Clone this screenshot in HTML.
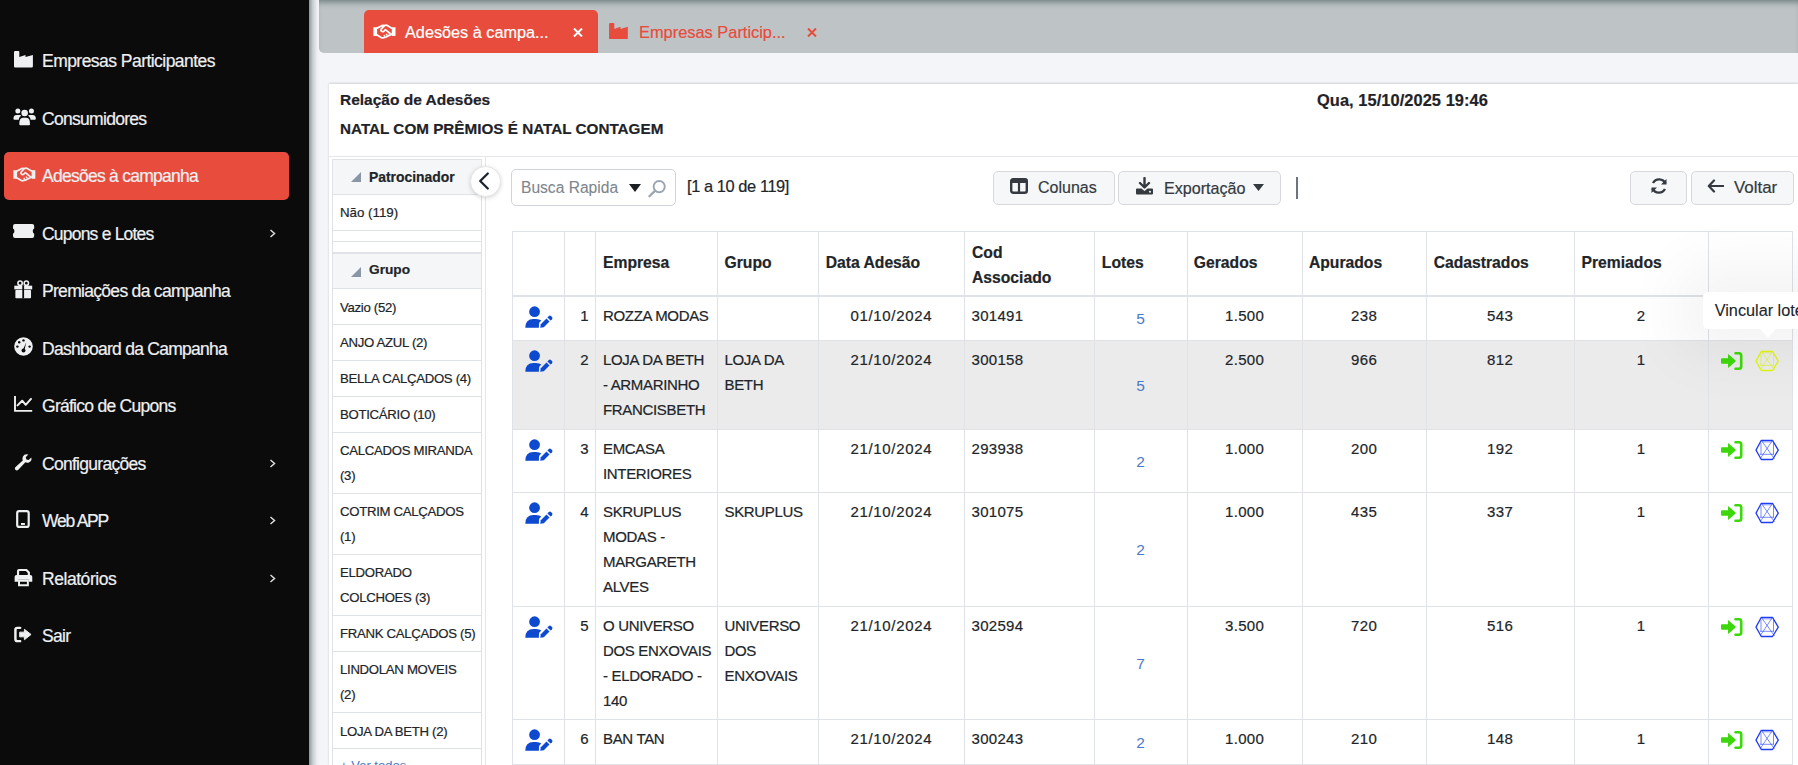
<!DOCTYPE html>
<html><head><meta charset="utf-8">
<style>
html,body{margin:0;padding:0;width:1798px;height:765px;overflow:hidden;position:relative;font-family:"Liberation Sans",sans-serif;}
.t{position:absolute;white-space:nowrap;-webkit-text-stroke-width:0.2px;}
</style></head><body>
<div style="position:absolute;left:0px;top:0px;width:1798px;height:765px;background:#f4f5f9"></div>
<div style="position:absolute;left:0px;top:0px;width:309px;height:765px;background:#0b0b0b"></div>
<div style="position:absolute;left:309px;top:0px;width:11px;height:765px;background:linear-gradient(to right,#8d9598 0%,#c9ced1 35%,#eef0f3 75%,#f3f4f8 100%)"></div>
<div style="position:absolute;left:4px;top:152px;width:285px;height:48px;background:#e74c3c;border-radius:5px"></div>
<div class="t" style="left:42px;top:53.19px;font-size:17.5px;line-height:17.5px;color:#eef0f2;letter-spacing:-0.537px;">Empresas Participantes</div>
<svg style="position:absolute;left:13.8px;top:50.8px;overflow:visible" width="19" height="16.5" viewBox="0 0 19 16.5"><path d="M1.2 0H4.5Q5.3 0 5.3 0.8V6L11.5 3.9V6L18.9 3.9V15.3Q18.9 16.5 17.7 16.5H1.2Q0 16.5 0 15.3V1.2Q0 0 1.2 0Z" fill="#eef0f2"/></svg>
<div class="t" style="left:42px;top:111.19px;font-size:17.5px;line-height:17.5px;color:#eef0f2;letter-spacing:-0.703px;">Consumidores</div>
<svg style="position:absolute;left:12.5px;top:106.7px;overflow:visible" width="23.3" height="18.8" viewBox="0 0 24 19"><circle cx="5" cy="4" r="2.6" fill="#eef0f2"/><circle cx="19" cy="4" r="2.6" fill="#eef0f2"/><circle cx="12" cy="6" r="3.4" fill="#eef0f2"/><path d="M0.5 11.5Q0.5 8 4 8H7Q8 8 8.5 8.5Q6 10.5 6 13H1.5Q0.5 13 0.5 12Z" fill="#eef0f2"/><path d="M23.5 11.5Q23.5 8 20 8H17Q16 8 15.5 8.5Q18 10.5 18 13H22.5Q23.5 13 23.5 12Z" fill="#eef0f2"/><path d="M6.5 17.5Q6.5 11 10 11H14Q17.5 11 17.5 17.5Q17.5 18.5 16.5 18.5H7.5Q6.5 18.5 6.5 17.5Z" fill="#eef0f2"/></svg>
<div class="t" style="left:42px;top:168.19px;font-size:17.5px;line-height:17.5px;color:#eef0f2;letter-spacing:-0.738px;">Adesões à campanha</div>
<svg style="position:absolute;left:12.5px;top:167.3px;overflow:visible" width="22.8" height="14.4" viewBox="0 0 24 15"><rect x="0.4" y="3.3" width="3.9" height="9" fill="#eef0f2"/><rect x="19.6" y="3.3" width="3.9" height="9" fill="#eef0f2"/><path d="M4.3 4.2L9.2 1.6Q10.5 1 11.8 1.6M19.6 4.2L14.5 1.3Q13 0.8 11.8 1.8L8.6 5.2Q7.8 6.6 9 7.6Q10.2 8.4 11.5 7.3L13 5.8L18.8 10.6M4.3 11.4L8.8 14.2Q9.8 14.7 10.8 14.2L13.5 13.5L17.5 11.5L19.6 10.5" fill="none" stroke="#eef0f2" stroke-width="1.8" stroke-linejoin="round" stroke-linecap="round"/><path d="M11.2 11.6L12.6 13M13.6 10.2L15 11.6" stroke="#eef0f2" stroke-width="1.5"/></svg>
<div class="t" style="left:42px;top:226.19px;font-size:17.5px;line-height:17.5px;color:#eef0f2;letter-spacing:-0.792px;">Cupons e Lotes</div>
<svg style="position:absolute;left:12.7px;top:223.8px;overflow:visible" width="21.2" height="14.1" viewBox="0 0 21 14"><path d="M2 0H19Q21 0 21 2V4.4Q19.6 4.9 19.6 7Q19.6 9.1 21 9.6V12Q21 14 19 14H2Q0 14 0 12V9.6Q1.4 9.1 1.4 7Q1.4 4.9 0 4.4V2Q0 0 2 0Z" fill="#eef0f2"/></svg>
<svg style="position:absolute;left:269px;top:228.7px;" width="7" height="9" viewBox="0 0 7 9"><path d="M1.5 1L5.5 4.5L1.5 8" fill="none" stroke="#ddd" stroke-width="1.5"/></svg>
<div class="t" style="left:42px;top:283.39px;font-size:17.5px;line-height:17.5px;color:#eef0f2;letter-spacing:-0.696px;">Premiações da campanha</div>
<svg style="position:absolute;left:13.6px;top:279.5px;overflow:visible" width="18.6" height="18.6" viewBox="0 0 19 19"><circle cx="6.2" cy="3.3" r="2.2" fill="none" stroke="#eef0f2" stroke-width="1.6"/><circle cx="12.6" cy="3.3" r="2.2" fill="none" stroke="#eef0f2" stroke-width="1.6"/><rect x="0.3" y="5.8" width="18.3" height="3.8" fill="#eef0f2"/><rect x="1.4" y="10.2" width="16" height="8.4" rx="0.8" fill="#eef0f2"/><rect x="8.5" y="5.8" width="1.8" height="13" fill="#0b0b0b"/></svg>
<div class="t" style="left:42px;top:341.49px;font-size:17.5px;line-height:17.5px;color:#eef0f2;letter-spacing:-0.734px;">Dashboard da Campanha</div>
<svg style="position:absolute;left:13.8px;top:336.5px;overflow:visible" width="19" height="19" viewBox="0 0 19 19"><circle cx="9.5" cy="9.5" r="9.3" fill="#eef0f2"/><circle cx="9.5" cy="3.4" r="1.2" fill="#0b0b0b"/><circle cx="5.2" cy="5.3" r="1.2" fill="#0b0b0b"/><circle cx="3.4" cy="9.6" r="1.2" fill="#0b0b0b"/><circle cx="15.6" cy="9.6" r="1.2" fill="#0b0b0b"/><path d="M8.7 13.2L12.3 5.2L10.3 13.7Z" fill="#0b0b0b"/><circle cx="9.5" cy="13.6" r="2" fill="#0b0b0b"/></svg>
<div class="t" style="left:42px;top:398.39px;font-size:17.5px;line-height:17.5px;color:#eef0f2;letter-spacing:-0.736px;">Gráfico de Cupons</div>
<svg style="position:absolute;left:13.9px;top:395.9px;overflow:visible" width="19" height="16" viewBox="0 0 19 16"><path d="M1 0V14.9H18.2" fill="none" stroke="#eef0f2" stroke-width="1.9"/><path d="M3.5 9.4L8.2 4.7L11.7 8.8L17 2.9" fill="none" stroke="#eef0f2" stroke-width="2" stroke-linejoin="round" stroke-linecap="round"/></svg>
<div class="t" style="left:42px;top:456.19px;font-size:17.5px;line-height:17.5px;color:#eef0f2;letter-spacing:-0.711px;">Configurações</div>
<svg style="position:absolute;left:13.5px;top:453.8px;overflow:visible" width="18.9" height="16.7" viewBox="0 0 19 17"><path d="M17.5 3.5L14.8 6.2L12.5 5.5L11.8 3.2L14.5 0.5Q10.5 -0.5 9 2.5Q8 4.5 8.8 6.5L1.2 13.5Q0 15 1.5 16.3Q3 17.3 4.3 16L11.5 8.5Q13.5 9.3 15.5 8.3Q18.5 6.8 17.5 3.5Z" fill="#eef0f2"/></svg>
<svg style="position:absolute;left:269px;top:458.7px;" width="7" height="9" viewBox="0 0 7 9"><path d="M1.5 1L5.5 4.5L1.5 8" fill="none" stroke="#ddd" stroke-width="1.5"/></svg>
<div class="t" style="left:42px;top:512.99px;font-size:17.5px;line-height:17.5px;color:#eef0f2;letter-spacing:-1.226px;">Web APP</div>
<svg style="position:absolute;left:15.8px;top:510px;overflow:visible" width="13.9" height="18" viewBox="0 0 14 18"><rect x="1.2" y="1" width="11.6" height="16" rx="2" fill="none" stroke="#eef0f2" stroke-width="2.2"/><path d="M5 14H9" stroke="#eef0f2" stroke-width="2"/></svg>
<svg style="position:absolute;left:269px;top:515.5px;" width="7" height="9" viewBox="0 0 7 9"><path d="M1.5 1L5.5 4.5L1.5 8" fill="none" stroke="#ddd" stroke-width="1.5"/></svg>
<div class="t" style="left:42px;top:571.09px;font-size:17.5px;line-height:17.5px;color:#eef0f2;letter-spacing:-0.449px;">Relatórios</div>
<svg style="position:absolute;left:13.5px;top:568.7px;overflow:visible" width="18.9" height="16.7" viewBox="0 0 19 17"><path d="M4 6V2Q4 1 5 1H12.5L15 3.5V6" fill="none" stroke="#eef0f2" stroke-width="2.2"/><path d="M2.5 6H16.5Q18.5 6 18.5 8V13H15V11H4V13H0.5V8Q0.5 6 2.5 6Z" fill="#eef0f2"/><path d="M5 12H14V16.5H5Z" fill="none" stroke="#eef0f2" stroke-width="2"/></svg>
<svg style="position:absolute;left:269px;top:573.6px;" width="7" height="9" viewBox="0 0 7 9"><path d="M1.5 1L5.5 4.5L1.5 8" fill="none" stroke="#ddd" stroke-width="1.5"/></svg>
<div class="t" style="left:42px;top:627.89px;font-size:17.5px;line-height:17.5px;color:#eef0f2;letter-spacing:-0.706px;">Sair</div>
<svg style="position:absolute;left:14.4px;top:626px;overflow:visible" width="18" height="17" viewBox="0 0 19 17"><path d="M6.5 1.5H3.5Q1.5 1.5 1.5 3.5V13.5Q1.5 15.5 3.5 15.5H6.5" fill="none" stroke="#eef0f2" stroke-width="2.6" stroke-linecap="round"/><path d="M11 3L18 8.5L11 14V11H6V6H11Z" fill="#eef0f2" stroke="#eef0f2" stroke-width="1" stroke-linejoin="round"/></svg>
<div style="position:absolute;left:319px;top:0px;width:1479px;height:53px;background:#bec3c6;border-bottom-left-radius:5px;box-shadow:inset 0 6px 6px -4px rgba(50,75,75,.6)"></div>
<div style="position:absolute;left:364px;top:10px;width:234px;height:43px;background:#e74c3c;border-radius:5px 5px 0 0"></div>
<svg style="position:absolute;left:373.4px;top:24px;" width="23" height="14.6" viewBox="0 0 24 15"><rect x="0.4" y="3.3" width="3.9" height="9" fill="#fff"/><rect x="19.6" y="3.3" width="3.9" height="9" fill="#fff"/><path d="M4.3 4.2L9.2 1.6Q10.5 1 11.8 1.6M19.6 4.2L14.5 1.3Q13 0.8 11.8 1.8L8.6 5.2Q7.8 6.6 9 7.6Q10.2 8.4 11.5 7.3L13 5.8L18.8 10.6M4.3 11.4L8.8 14.2Q9.8 14.7 10.8 14.2L13.5 13.5L17.5 11.5L19.6 10.5" fill="none" stroke="#fff" stroke-width="1.8" stroke-linejoin="round" stroke-linecap="round"/><path d="M11.2 11.6L12.6 13M13.6 10.2L15 11.6" stroke="#fff" stroke-width="1.5"/></svg>
<div class="t" style="left:405px;top:23.94px;font-size:16.25px;line-height:16.25px;color:#fff;">Adesões à campa...</div>
<svg style="position:absolute;left:573px;top:27.7px;" width="10" height="9" viewBox="0 0 10 9"><path d="M1 0.5L9 8.5M9 0.5L1 8.5" stroke="#fff" stroke-width="2"/></svg>
<svg style="position:absolute;left:609px;top:23px;" width="19" height="16.4" viewBox="0 0 19 16.5"><path d="M1.2 0H4.5Q5.3 0 5.3 0.8V6L11.5 3.9V6L18.9 3.9V15.3Q18.9 16.5 17.7 16.5H1.2Q0 16.5 0 15.3V1.2Q0 0 1.2 0Z" fill="#e74c3c"/></svg>
<div class="t" style="left:639px;top:23.82px;font-size:16.4px;line-height:16.4px;color:#e74c3c;">Empresas Particip...</div>
<svg style="position:absolute;left:807px;top:27.7px;" width="10" height="9" viewBox="0 0 10 9"><path d="M1 0.5L9 8.5M9 0.5L1 8.5" stroke="#e74c3c" stroke-width="2"/></svg>
<div style="position:absolute;left:329px;top:84px;width:1469px;height:681px;background:#fff;box-shadow:0 -1px 2px rgba(0,0,0,.13),0 0 2px rgba(0,0,0,.06)"></div>
<div style="position:absolute;left:329px;top:156px;width:1469px;height:1px;background:#e4e6ea"></div>
<div class="t" style="left:340px;top:92.28px;font-size:15.5px;line-height:15.5px;color:#1f2328;font-weight:bold;">Relação de Adesões</div>
<div class="t" style="left:340px;top:120.79px;font-size:15.25px;line-height:15.25px;color:#1f2328;font-weight:bold;">NATAL COM PRÊMIOS É NATAL CONTAGEM</div>
<div class="t" style="left:1317px;top:91.72px;font-size:16.4px;line-height:16.4px;color:#1f2328;font-weight:bold;letter-spacing:0.067px;">Qua, 15/10/2025 19:46</div>
<div style="position:absolute;left:485px;top:157px;width:1px;height:608px;background:#e4e6ea"></div>
<div style="position:absolute;left:332px;top:159px;width:149px;height:35px;background:#f5f6f8"></div>
<div style="position:absolute;left:332px;top:253px;width:149px;height:35px;background:#f5f6f8"></div>
<div style="position:absolute;left:332px;top:159px;width:150px;height:1px;background:#dfe2e6"></div>
<div style="position:absolute;left:332px;top:194px;width:150px;height:1px;background:#dfe2e6"></div>
<div style="position:absolute;left:332px;top:230px;width:150px;height:1px;background:#dfe2e6"></div>
<div style="position:absolute;left:332px;top:241px;width:150px;height:1px;background:#dfe2e6"></div>
<div style="position:absolute;left:332px;top:252px;width:150px;height:2px;background:#dfe2e6"></div>
<div style="position:absolute;left:332px;top:288px;width:150px;height:1px;background:#dfe2e6"></div>
<div style="position:absolute;left:332px;top:324px;width:150px;height:1px;background:#dfe2e6"></div>
<div style="position:absolute;left:332px;top:360px;width:150px;height:1px;background:#dfe2e6"></div>
<div style="position:absolute;left:332px;top:396px;width:150px;height:1px;background:#dfe2e6"></div>
<div style="position:absolute;left:332px;top:432px;width:150px;height:1px;background:#dfe2e6"></div>
<div style="position:absolute;left:332px;top:493px;width:150px;height:1px;background:#dfe2e6"></div>
<div style="position:absolute;left:332px;top:554px;width:150px;height:1px;background:#dfe2e6"></div>
<div style="position:absolute;left:332px;top:615px;width:150px;height:1px;background:#dfe2e6"></div>
<div style="position:absolute;left:332px;top:651px;width:150px;height:1px;background:#dfe2e6"></div>
<div style="position:absolute;left:332px;top:712px;width:150px;height:1px;background:#dfe2e6"></div>
<div style="position:absolute;left:332px;top:748px;width:150px;height:1px;background:#dfe2e6"></div>
<div style="position:absolute;left:332px;top:159px;width:1px;height:606px;background:#dfe2e6"></div>
<div style="position:absolute;left:481px;top:159px;width:1px;height:606px;background:#dfe2e6"></div>
<svg style="position:absolute;left:351px;top:172px;" width="10" height="10" viewBox="0 0 10 10"><path d="M10 0V10H0Z" fill="#8a95a5"/></svg>
<div class="t" style="left:369px;top:170.93px;font-size:13.9px;line-height:13.9px;color:#212529;font-weight:bold;">Patrocinador</div>
<svg style="position:absolute;left:351px;top:267px;" width="10" height="10" viewBox="0 0 10 10"><path d="M10 0V10H0Z" fill="#8a95a5"/></svg>
<div class="t" style="left:369px;top:263.40px;font-size:13.7px;line-height:13.7px;color:#212529;font-weight:bold;">Grupo</div>
<div class="t" style="left:340px;top:206.24px;font-size:13.3px;line-height:13.3px;color:#212529;">Não (119)</div>
<div class="t" style="left:340px;top:300.53px;font-size:13.2px;line-height:13.2px;color:#212529;letter-spacing:-0.3px;">Vazio (52)</div>
<div class="t" style="left:340px;top:336.33px;font-size:13.2px;line-height:13.2px;color:#212529;letter-spacing:-0.3px;">ANJO AZUL (2)</div>
<div class="t" style="left:340px;top:372.33px;font-size:13.2px;line-height:13.2px;color:#212529;letter-spacing:-0.3px;">BELLA CALÇADOS (4)</div>
<div class="t" style="left:340px;top:408.33px;font-size:13.2px;line-height:13.2px;color:#212529;letter-spacing:-0.3px;">BOTICÁRIO (10)</div>
<div class="t" style="left:340px;top:444.33px;font-size:13.2px;line-height:13.2px;color:#212529;letter-spacing:-0.3px;">CALCADOS MIRANDA</div>
<div class="t" style="left:340px;top:469.33px;font-size:13.2px;line-height:13.2px;color:#212529;letter-spacing:-0.3px;">(3)</div>
<div class="t" style="left:340px;top:505.33px;font-size:13.2px;line-height:13.2px;color:#212529;letter-spacing:-0.3px;">COTRIM CALÇADOS</div>
<div class="t" style="left:340px;top:530.33px;font-size:13.2px;line-height:13.2px;color:#212529;letter-spacing:-0.3px;">(1)</div>
<div class="t" style="left:340px;top:566.33px;font-size:13.2px;line-height:13.2px;color:#212529;letter-spacing:-0.3px;">ELDORADO</div>
<div class="t" style="left:340px;top:591.33px;font-size:13.2px;line-height:13.2px;color:#212529;letter-spacing:-0.3px;">COLCHOES (3)</div>
<div class="t" style="left:340px;top:627.33px;font-size:13.2px;line-height:13.2px;color:#212529;letter-spacing:-0.3px;">FRANK CALÇADOS (5)</div>
<div class="t" style="left:340px;top:663.33px;font-size:13.2px;line-height:13.2px;color:#212529;letter-spacing:-0.3px;">LINDOLAN MOVEIS</div>
<div class="t" style="left:340px;top:688.33px;font-size:13.2px;line-height:13.2px;color:#212529;letter-spacing:-0.3px;">(2)</div>
<div class="t" style="left:340px;top:724.63px;font-size:13.2px;line-height:13.2px;color:#212529;letter-spacing:-0.3px;">LOJA DA BETH (2)</div>
<div class="t" style="left:340px;top:759.00px;font-size:13px;line-height:13px;color:#4a78c8;-webkit-text-stroke-width:0;">+ Ver todos</div>
<div style="position:absolute;left:469.5px;top:166.3px;width:31px;height:31px;background:#fff;border-radius:50%;box-shadow:0 1px 4px rgba(0,0,0,.16);border:1px solid #e6e6e6;box-sizing:border-box"></div>
<svg style="position:absolute;left:477px;top:171px;" width="14" height="20" viewBox="0 0 14 20"><path d="M10.8 2.5L3.2 10L10.8 17.5" fill="none" stroke="#1b2230" stroke-width="2.3" stroke-linecap="round" stroke-linejoin="round"/></svg>
<div style="position:absolute;left:511px;top:169px;width:165px;height:37px;border:1px solid #ced4da;border-radius:5px;box-sizing:border-box;background:#fff"></div>
<div class="t" style="left:521px;top:180.09px;font-size:15.6px;line-height:15.6px;color:#80868d;-webkit-text-stroke-width:0.1px;">Busca Rapida</div>
<svg style="position:absolute;left:629px;top:184px;" width="12" height="8" viewBox="0 0 12 8"><path d="M0 0H12L6 8Z" fill="#1b1f24"/></svg>
<svg style="position:absolute;left:647px;top:179px;" width="20" height="20" viewBox="0 0 20 20"><circle cx="12.2" cy="7.6" r="5.6" fill="none" stroke="#9aa4b3" stroke-width="1.9"/><path d="M8.2 11.6L2.4 17.3" stroke="#9aa4b3" stroke-width="2.3" stroke-linecap="round"/></svg>
<div class="t" style="left:687px;top:178.12px;font-size:16.4px;line-height:16.4px;color:#212529;letter-spacing:-0.414px;">[1 a 10 de 119]</div>
<div style="position:absolute;left:993px;top:171px;width:122px;height:34px;background:#f6f7f9;border:1px solid #d6d8db;border-radius:5px;box-sizing:border-box"></div>
<div style="position:absolute;left:1118px;top:171px;width:163px;height:34px;background:#f6f7f9;border:1px solid #d6d8db;border-radius:5px;box-sizing:border-box"></div>
<div style="position:absolute;left:1630px;top:171px;width:57px;height:34px;background:#f6f7f9;border:1px solid #d6d8db;border-radius:5px;box-sizing:border-box"></div>
<div style="position:absolute;left:1691px;top:171px;width:103px;height:34px;background:#f6f7f9;border:1px solid #d6d8db;border-radius:5px;box-sizing:border-box"></div>
<svg style="position:absolute;left:1010px;top:178px;" width="18" height="16" viewBox="0 0 18 16"><rect x="1.2" y="1.2" width="15.6" height="13.6" rx="2" fill="none" stroke="#343a40" stroke-width="2.4"/><rect x="0.5" y="0.5" width="17" height="4.6" rx="2" fill="#343a40"/><path d="M9 4V15" stroke="#343a40" stroke-width="2.2"/></svg>
<div class="t" style="left:1038px;top:179.86px;font-size:16px;line-height:16px;color:#343a40;">Colunas</div>
<svg style="position:absolute;left:1135px;top:177px;" width="19" height="18" viewBox="0 0 19 18"><path d="M9.5 1V10M5 6L9.5 10.5L14 6" fill="none" stroke="#343a40" stroke-width="2.4" stroke-linecap="round" stroke-linejoin="round"/><path d="M1 12.5Q1 11.5 2 11.5H6.5L9.5 14L12.5 11.5H17Q18 11.5 18 12.5V16.5Q18 17.5 17 17.5H2Q1 17.5 1 16.5Z" fill="#343a40"/><circle cx="15" cy="14.8" r="1" fill="#f6f7f9"/></svg>
<div class="t" style="left:1164px;top:179.77px;font-size:16.1px;line-height:16.1px;color:#343a40;">Exportação</div>
<svg style="position:absolute;left:1253px;top:183.5px;" width="11" height="7" viewBox="0 0 11 7"><path d="M0 0H11L5.5 7Z" fill="#343a40"/></svg>
<div style="position:absolute;left:1296px;top:176.5px;width:2px;height:22.5px;background:#6c757d"></div>
<svg style="position:absolute;left:1650px;top:178px;" width="18" height="16" viewBox="0 0 18 16"><path d="M15.5 5.5A7 7 0 0 0 3 5" fill="none" stroke="#343a40" stroke-width="2.4"/><path d="M16.5 1V6.5H11Z" fill="#343a40"/><path d="M2.5 10.5A7 7 0 0 0 15 11" fill="none" stroke="#343a40" stroke-width="2.4"/><path d="M1.5 15V9.5H7Z" fill="#343a40"/></svg>
<svg style="position:absolute;left:1707px;top:179px;" width="17" height="14" viewBox="0 0 17 14"><path d="M7 1.5L1.8 7L7 12.5M2 7H16.5" fill="none" stroke="#343a40" stroke-width="2.2" stroke-linecap="round" stroke-linejoin="round"/></svg>
<div class="t" style="left:1734px;top:179.89px;font-size:16.9px;line-height:16.9px;color:#343a40;">Voltar</div>
<!--TABLE-->
<div style="position:absolute;left:512px;top:231px;width:1281px;height:533px;background:#fff"></div>
<div style="position:absolute;left:512px;top:341px;width:1281px;height:88px;background:#ebebeb"></div>
<div style="position:absolute;left:512px;top:231px;width:1281px;height:1px;background:#dfe2e6"></div>
<div style="position:absolute;left:512px;top:295px;width:1281px;height:2px;background:#dfe2e6"></div>
<div style="position:absolute;left:512px;top:340px;width:1281px;height:1px;background:#dfe2e6"></div>
<div style="position:absolute;left:512px;top:429px;width:1281px;height:1px;background:#dfe2e6"></div>
<div style="position:absolute;left:512px;top:492px;width:1281px;height:1px;background:#dfe2e6"></div>
<div style="position:absolute;left:512px;top:606px;width:1281px;height:1px;background:#dfe2e6"></div>
<div style="position:absolute;left:512px;top:719px;width:1281px;height:1px;background:#dfe2e6"></div>
<div style="position:absolute;left:512px;top:764px;width:1281px;height:1px;background:#dfe2e6"></div>
<div style="position:absolute;left:512px;top:231px;width:1px;height:534px;background:#dfe2e6"></div>
<div style="position:absolute;left:564px;top:231px;width:1px;height:534px;background:#dfe2e6"></div>
<div style="position:absolute;left:595px;top:231px;width:1px;height:534px;background:#dfe2e6"></div>
<div style="position:absolute;left:717px;top:231px;width:1px;height:534px;background:#dfe2e6"></div>
<div style="position:absolute;left:818px;top:231px;width:1px;height:534px;background:#dfe2e6"></div>
<div style="position:absolute;left:964px;top:231px;width:1px;height:534px;background:#dfe2e6"></div>
<div style="position:absolute;left:1094px;top:231px;width:1px;height:534px;background:#dfe2e6"></div>
<div style="position:absolute;left:1187px;top:231px;width:1px;height:534px;background:#dfe2e6"></div>
<div style="position:absolute;left:1302px;top:231px;width:1px;height:534px;background:#dfe2e6"></div>
<div style="position:absolute;left:1426px;top:231px;width:1px;height:534px;background:#dfe2e6"></div>
<div style="position:absolute;left:1574px;top:231px;width:1px;height:534px;background:#dfe2e6"></div>
<div style="position:absolute;left:1708px;top:231px;width:1px;height:534px;background:#dfe2e6"></div>
<div style="position:absolute;left:1792px;top:231px;width:1px;height:534px;background:#dfe2e6"></div>
<div class="t" style="left:603px;top:255.21px;font-size:15.7px;line-height:15.7px;color:#212529;font-weight:bold;">Empresa</div>
<div class="t" style="left:724.5px;top:255.21px;font-size:15.7px;line-height:15.7px;color:#212529;font-weight:bold;">Grupo</div>
<div class="t" style="left:825.7px;top:255.21px;font-size:15.7px;line-height:15.7px;color:#212529;font-weight:bold;">Data Adesão</div>
<div class="t" style="left:1101.8px;top:255.21px;font-size:15.7px;line-height:15.7px;color:#212529;font-weight:bold;">Lotes</div>
<div class="t" style="left:1193.8px;top:255.21px;font-size:15.7px;line-height:15.7px;color:#212529;font-weight:bold;">Gerados</div>
<div class="t" style="left:1308.9px;top:255.21px;font-size:15.7px;line-height:15.7px;color:#212529;font-weight:bold;">Apurados</div>
<div class="t" style="left:1433.7px;top:255.21px;font-size:15.7px;line-height:15.7px;color:#212529;font-weight:bold;">Cadastrados</div>
<div class="t" style="left:1581.5px;top:255.21px;font-size:15.7px;line-height:15.7px;color:#212529;font-weight:bold;">Premiados</div>
<div class="t" style="left:972px;top:244.51px;font-size:15.7px;line-height:15.7px;color:#212529;font-weight:bold;">Cod</div>
<div class="t" style="left:972px;top:269.51px;font-size:15.7px;line-height:15.7px;color:#212529;font-weight:bold;">Associado</div>
<div class="t" style="left:488.5px;width:100px;text-align:right;top:308.30px;font-size:15px;line-height:15px;color:#212529">1</div>
<div class="t" style="left:603px;top:308.30px;font-size:15px;line-height:15px;color:#212529;letter-spacing:-0.33px;">ROZZA MODAS</div>
<div class="t" style="left:791.34px;width:200px;text-align:center;top:308.30px;font-size:15px;line-height:15px;color:#212529;letter-spacing:0.68px;">01/10/2024</div>
<div class="t" style="left:971.5px;top:308.30px;font-size:15px;line-height:15px;color:#212529;letter-spacing:0.3px;">301491</div>
<div class="t" style="left:1040.5px;width:200px;text-align:center;top:311.18px;font-size:15.5px;line-height:15.5px;color:#4d79c9;letter-spacing:0px;-webkit-text-stroke-width:0;">5</div>
<div class="t" style="left:1144.65px;width:200px;text-align:center;top:308.30px;font-size:15px;line-height:15px;color:#212529;letter-spacing:0.3px;">1.500</div>
<div class="t" style="left:1264.225px;width:200px;text-align:center;top:308.30px;font-size:15px;line-height:15px;color:#212529;letter-spacing:0.45px;">238</div>
<div class="t" style="left:1400.225px;width:200px;text-align:center;top:308.30px;font-size:15px;line-height:15px;color:#212529;letter-spacing:0.45px;">543</div>
<div class="t" style="left:1541.225px;width:200px;text-align:center;top:308.30px;font-size:15px;line-height:15px;color:#212529;letter-spacing:0.45px;">2</div>
<svg style="position:absolute;left:525px;top:306.2px;" width="28" height="22" viewBox="0 0 28 22"><circle cx="9.55" cy="5.7" r="5.4" fill="#0d4ad0"/><path d="M0.3 21.7Q0.3 12.9 8.5 12.9H11Q14.5 12.9 16.3 14.4L14.4 16.6Q13.8 17.5 13.9 21.7Z" fill="#0d4ad0"/><path d="M15.2 21.8L15.8 18.2L21.5 12.5L24.5 15.5L18.8 21.2Z" fill="#0d4ad0"/><path d="M22.4 11.4L23.8 10Q24.9 9 26 10L27 11Q28 12.1 27 13.2L25.6 14.6Z" fill="#0d4ad0"/></svg>
<svg style="position:absolute;left:1720px;top:305.8px;" width="24" height="22" viewBox="0 0 24 22"><path d="M2 8.2H8V4.4Q8 4 8.4 4.3L15.6 10.6Q16 11 15.6 11.4L8.4 17.7Q8 18 8 17.6V13.8H2Q1 13.8 1 12.8V9.2Q1 8.2 2 8.2Z" fill="#3dd80b"/><path d="M15.5 3.3H19Q21.2 3.3 21.2 5.5V16.6Q21.2 18.8 19 18.8H15.5" fill="none" stroke="#3dd80b" stroke-width="2.6" stroke-linecap="round"/></svg>
<svg style="position:absolute;left:1755px;top:305.7px;" width="24" height="22" viewBox="0 0 24 22"><path d="M6.3 1.3H17.5L23.3 11.1L17.5 20.5H6.3L1 11.1Z" fill="none" stroke="#1f3cf5" stroke-width="1.3" stroke-linejoin="round"/><path d="M6.3 1.3L19.5 20M17.5 1.3L5 20M5 15.3H19M6 4V15.3M18.5 4V15.3M7 2.8H17" fill="none" stroke="#1f3cf5" stroke-width="0.8" opacity="0.75"/></svg>
<div class="t" style="left:488.5px;width:100px;text-align:right;top:352.30px;font-size:15px;line-height:15px;color:#212529">2</div>
<div class="t" style="left:603px;top:352.30px;font-size:15px;line-height:15px;color:#212529;letter-spacing:-0.33px;">LOJA DA BETH</div>
<div class="t" style="left:603px;top:377.30px;font-size:15px;line-height:15px;color:#212529;letter-spacing:-0.33px;">- ARMARINHO</div>
<div class="t" style="left:603px;top:402.30px;font-size:15px;line-height:15px;color:#212529;letter-spacing:-0.33px;">FRANCISBETH</div>
<div class="t" style="left:724.5px;top:352.30px;font-size:15px;line-height:15px;color:#212529;letter-spacing:-0.33px;">LOJA DA</div>
<div class="t" style="left:724.5px;top:377.30px;font-size:15px;line-height:15px;color:#212529;letter-spacing:-0.33px;">BETH</div>
<div class="t" style="left:791.34px;width:200px;text-align:center;top:352.30px;font-size:15px;line-height:15px;color:#212529;letter-spacing:0.68px;">21/10/2024</div>
<div class="t" style="left:971.5px;top:352.30px;font-size:15px;line-height:15px;color:#212529;letter-spacing:0.3px;">300158</div>
<div class="t" style="left:1040.5px;width:200px;text-align:center;top:377.68px;font-size:15.5px;line-height:15.5px;color:#4d79c9;letter-spacing:0px;-webkit-text-stroke-width:0;">5</div>
<div class="t" style="left:1144.65px;width:200px;text-align:center;top:352.30px;font-size:15px;line-height:15px;color:#212529;letter-spacing:0.3px;">2.500</div>
<div class="t" style="left:1264.225px;width:200px;text-align:center;top:352.30px;font-size:15px;line-height:15px;color:#212529;letter-spacing:0.45px;">966</div>
<div class="t" style="left:1400.225px;width:200px;text-align:center;top:352.30px;font-size:15px;line-height:15px;color:#212529;letter-spacing:0.45px;">812</div>
<div class="t" style="left:1541.225px;width:200px;text-align:center;top:352.30px;font-size:15px;line-height:15px;color:#212529;letter-spacing:0.45px;">1</div>
<svg style="position:absolute;left:525px;top:350.2px;" width="28" height="22" viewBox="0 0 28 22"><circle cx="9.55" cy="5.7" r="5.4" fill="#0d4ad0"/><path d="M0.3 21.7Q0.3 12.9 8.5 12.9H11Q14.5 12.9 16.3 14.4L14.4 16.6Q13.8 17.5 13.9 21.7Z" fill="#0d4ad0"/><path d="M15.2 21.8L15.8 18.2L21.5 12.5L24.5 15.5L18.8 21.2Z" fill="#0d4ad0"/><path d="M22.4 11.4L23.8 10Q24.9 9 26 10L27 11Q28 12.1 27 13.2L25.6 14.6Z" fill="#0d4ad0"/></svg>
<svg style="position:absolute;left:1720px;top:349.8px;" width="24" height="22" viewBox="0 0 24 22"><path d="M2 8.2H8V4.4Q8 4 8.4 4.3L15.6 10.6Q16 11 15.6 11.4L8.4 17.7Q8 18 8 17.6V13.8H2Q1 13.8 1 12.8V9.2Q1 8.2 2 8.2Z" fill="#3dd80b"/><path d="M15.5 3.3H19Q21.2 3.3 21.2 5.5V16.6Q21.2 18.8 19 18.8H15.5" fill="none" stroke="#3dd80b" stroke-width="2.6" stroke-linecap="round"/></svg>
<svg style="position:absolute;left:1755px;top:349.7px;" width="24" height="22" viewBox="0 0 24 22"><path d="M6.3 1.3H17.5L23.3 11.1L17.5 20.5H6.3L1 11.1Z" fill="none" stroke="#def50f" stroke-width="1.3" stroke-linejoin="round"/><path d="M6.3 1.3L19.5 20M17.5 1.3L5 20M5 15.3H19M6 4V15.3M18.5 4V15.3M7 2.8H17" fill="none" stroke="#def50f" stroke-width="0.8" opacity="0.75"/></svg>
<div class="t" style="left:488.5px;width:100px;text-align:right;top:441.30px;font-size:15px;line-height:15px;color:#212529">3</div>
<div class="t" style="left:603px;top:441.30px;font-size:15px;line-height:15px;color:#212529;letter-spacing:-0.33px;">EMCASA</div>
<div class="t" style="left:603px;top:466.30px;font-size:15px;line-height:15px;color:#212529;letter-spacing:-0.33px;">INTERIORES</div>
<div class="t" style="left:791.34px;width:200px;text-align:center;top:441.30px;font-size:15px;line-height:15px;color:#212529;letter-spacing:0.68px;">21/10/2024</div>
<div class="t" style="left:971.5px;top:441.30px;font-size:15px;line-height:15px;color:#212529;letter-spacing:0.3px;">293938</div>
<div class="t" style="left:1040.5px;width:200px;text-align:center;top:453.68px;font-size:15.5px;line-height:15.5px;color:#4d79c9;letter-spacing:0px;-webkit-text-stroke-width:0;">2</div>
<div class="t" style="left:1144.65px;width:200px;text-align:center;top:441.30px;font-size:15px;line-height:15px;color:#212529;letter-spacing:0.3px;">1.000</div>
<div class="t" style="left:1264.225px;width:200px;text-align:center;top:441.30px;font-size:15px;line-height:15px;color:#212529;letter-spacing:0.45px;">200</div>
<div class="t" style="left:1400.225px;width:200px;text-align:center;top:441.30px;font-size:15px;line-height:15px;color:#212529;letter-spacing:0.45px;">192</div>
<div class="t" style="left:1541.225px;width:200px;text-align:center;top:441.30px;font-size:15px;line-height:15px;color:#212529;letter-spacing:0.45px;">1</div>
<svg style="position:absolute;left:525px;top:439.2px;" width="28" height="22" viewBox="0 0 28 22"><circle cx="9.55" cy="5.7" r="5.4" fill="#0d4ad0"/><path d="M0.3 21.7Q0.3 12.9 8.5 12.9H11Q14.5 12.9 16.3 14.4L14.4 16.6Q13.8 17.5 13.9 21.7Z" fill="#0d4ad0"/><path d="M15.2 21.8L15.8 18.2L21.5 12.5L24.5 15.5L18.8 21.2Z" fill="#0d4ad0"/><path d="M22.4 11.4L23.8 10Q24.9 9 26 10L27 11Q28 12.1 27 13.2L25.6 14.6Z" fill="#0d4ad0"/></svg>
<svg style="position:absolute;left:1720px;top:438.8px;" width="24" height="22" viewBox="0 0 24 22"><path d="M2 8.2H8V4.4Q8 4 8.4 4.3L15.6 10.6Q16 11 15.6 11.4L8.4 17.7Q8 18 8 17.6V13.8H2Q1 13.8 1 12.8V9.2Q1 8.2 2 8.2Z" fill="#3dd80b"/><path d="M15.5 3.3H19Q21.2 3.3 21.2 5.5V16.6Q21.2 18.8 19 18.8H15.5" fill="none" stroke="#3dd80b" stroke-width="2.6" stroke-linecap="round"/></svg>
<svg style="position:absolute;left:1755px;top:438.7px;" width="24" height="22" viewBox="0 0 24 22"><path d="M6.3 1.3H17.5L23.3 11.1L17.5 20.5H6.3L1 11.1Z" fill="none" stroke="#1f3cf5" stroke-width="1.3" stroke-linejoin="round"/><path d="M6.3 1.3L19.5 20M17.5 1.3L5 20M5 15.3H19M6 4V15.3M18.5 4V15.3M7 2.8H17" fill="none" stroke="#1f3cf5" stroke-width="0.8" opacity="0.75"/></svg>
<div class="t" style="left:488.5px;width:100px;text-align:right;top:504.30px;font-size:15px;line-height:15px;color:#212529">4</div>
<div class="t" style="left:603px;top:504.30px;font-size:15px;line-height:15px;color:#212529;letter-spacing:-0.33px;">SKRUPLUS</div>
<div class="t" style="left:603px;top:529.30px;font-size:15px;line-height:15px;color:#212529;letter-spacing:-0.33px;">MODAS -</div>
<div class="t" style="left:603px;top:554.30px;font-size:15px;line-height:15px;color:#212529;letter-spacing:-0.33px;">MARGARETH</div>
<div class="t" style="left:603px;top:579.30px;font-size:15px;line-height:15px;color:#212529;letter-spacing:-0.33px;">ALVES</div>
<div class="t" style="left:724.5px;top:504.30px;font-size:15px;line-height:15px;color:#212529;letter-spacing:-0.33px;">SKRUPLUS</div>
<div class="t" style="left:791.34px;width:200px;text-align:center;top:504.30px;font-size:15px;line-height:15px;color:#212529;letter-spacing:0.68px;">21/10/2024</div>
<div class="t" style="left:971.5px;top:504.30px;font-size:15px;line-height:15px;color:#212529;letter-spacing:0.3px;">301075</div>
<div class="t" style="left:1040.5px;width:200px;text-align:center;top:542.18px;font-size:15.5px;line-height:15.5px;color:#4d79c9;letter-spacing:0px;-webkit-text-stroke-width:0;">2</div>
<div class="t" style="left:1144.65px;width:200px;text-align:center;top:504.30px;font-size:15px;line-height:15px;color:#212529;letter-spacing:0.3px;">1.000</div>
<div class="t" style="left:1264.225px;width:200px;text-align:center;top:504.30px;font-size:15px;line-height:15px;color:#212529;letter-spacing:0.45px;">435</div>
<div class="t" style="left:1400.225px;width:200px;text-align:center;top:504.30px;font-size:15px;line-height:15px;color:#212529;letter-spacing:0.45px;">337</div>
<div class="t" style="left:1541.225px;width:200px;text-align:center;top:504.30px;font-size:15px;line-height:15px;color:#212529;letter-spacing:0.45px;">1</div>
<svg style="position:absolute;left:525px;top:502.2px;" width="28" height="22" viewBox="0 0 28 22"><circle cx="9.55" cy="5.7" r="5.4" fill="#0d4ad0"/><path d="M0.3 21.7Q0.3 12.9 8.5 12.9H11Q14.5 12.9 16.3 14.4L14.4 16.6Q13.8 17.5 13.9 21.7Z" fill="#0d4ad0"/><path d="M15.2 21.8L15.8 18.2L21.5 12.5L24.5 15.5L18.8 21.2Z" fill="#0d4ad0"/><path d="M22.4 11.4L23.8 10Q24.9 9 26 10L27 11Q28 12.1 27 13.2L25.6 14.6Z" fill="#0d4ad0"/></svg>
<svg style="position:absolute;left:1720px;top:501.8px;" width="24" height="22" viewBox="0 0 24 22"><path d="M2 8.2H8V4.4Q8 4 8.4 4.3L15.6 10.6Q16 11 15.6 11.4L8.4 17.7Q8 18 8 17.6V13.8H2Q1 13.8 1 12.8V9.2Q1 8.2 2 8.2Z" fill="#3dd80b"/><path d="M15.5 3.3H19Q21.2 3.3 21.2 5.5V16.6Q21.2 18.8 19 18.8H15.5" fill="none" stroke="#3dd80b" stroke-width="2.6" stroke-linecap="round"/></svg>
<svg style="position:absolute;left:1755px;top:501.7px;" width="24" height="22" viewBox="0 0 24 22"><path d="M6.3 1.3H17.5L23.3 11.1L17.5 20.5H6.3L1 11.1Z" fill="none" stroke="#1f3cf5" stroke-width="1.3" stroke-linejoin="round"/><path d="M6.3 1.3L19.5 20M17.5 1.3L5 20M5 15.3H19M6 4V15.3M18.5 4V15.3M7 2.8H17" fill="none" stroke="#1f3cf5" stroke-width="0.8" opacity="0.75"/></svg>
<div class="t" style="left:488.5px;width:100px;text-align:right;top:618.30px;font-size:15px;line-height:15px;color:#212529">5</div>
<div class="t" style="left:603px;top:618.30px;font-size:15px;line-height:15px;color:#212529;letter-spacing:-0.33px;">O UNIVERSO</div>
<div class="t" style="left:603px;top:643.30px;font-size:15px;line-height:15px;color:#212529;letter-spacing:-0.33px;">DOS ENXOVAIS</div>
<div class="t" style="left:603px;top:668.30px;font-size:15px;line-height:15px;color:#212529;letter-spacing:-0.33px;">- ELDORADO -</div>
<div class="t" style="left:603px;top:693.30px;font-size:15px;line-height:15px;color:#212529;letter-spacing:-0.33px;">140</div>
<div class="t" style="left:724.5px;top:618.30px;font-size:15px;line-height:15px;color:#212529;letter-spacing:-0.33px;">UNIVERSO</div>
<div class="t" style="left:724.5px;top:643.30px;font-size:15px;line-height:15px;color:#212529;letter-spacing:-0.33px;">DOS</div>
<div class="t" style="left:724.5px;top:668.30px;font-size:15px;line-height:15px;color:#212529;letter-spacing:-0.33px;">ENXOVAIS</div>
<div class="t" style="left:791.34px;width:200px;text-align:center;top:618.30px;font-size:15px;line-height:15px;color:#212529;letter-spacing:0.68px;">21/10/2024</div>
<div class="t" style="left:971.5px;top:618.30px;font-size:15px;line-height:15px;color:#212529;letter-spacing:0.3px;">302594</div>
<div class="t" style="left:1040.5px;width:200px;text-align:center;top:655.68px;font-size:15.5px;line-height:15.5px;color:#4d79c9;letter-spacing:0px;-webkit-text-stroke-width:0;">7</div>
<div class="t" style="left:1144.65px;width:200px;text-align:center;top:618.30px;font-size:15px;line-height:15px;color:#212529;letter-spacing:0.3px;">3.500</div>
<div class="t" style="left:1264.225px;width:200px;text-align:center;top:618.30px;font-size:15px;line-height:15px;color:#212529;letter-spacing:0.45px;">720</div>
<div class="t" style="left:1400.225px;width:200px;text-align:center;top:618.30px;font-size:15px;line-height:15px;color:#212529;letter-spacing:0.45px;">516</div>
<div class="t" style="left:1541.225px;width:200px;text-align:center;top:618.30px;font-size:15px;line-height:15px;color:#212529;letter-spacing:0.45px;">1</div>
<svg style="position:absolute;left:525px;top:616.2px;" width="28" height="22" viewBox="0 0 28 22"><circle cx="9.55" cy="5.7" r="5.4" fill="#0d4ad0"/><path d="M0.3 21.7Q0.3 12.9 8.5 12.9H11Q14.5 12.9 16.3 14.4L14.4 16.6Q13.8 17.5 13.9 21.7Z" fill="#0d4ad0"/><path d="M15.2 21.8L15.8 18.2L21.5 12.5L24.5 15.5L18.8 21.2Z" fill="#0d4ad0"/><path d="M22.4 11.4L23.8 10Q24.9 9 26 10L27 11Q28 12.1 27 13.2L25.6 14.6Z" fill="#0d4ad0"/></svg>
<svg style="position:absolute;left:1720px;top:615.8px;" width="24" height="22" viewBox="0 0 24 22"><path d="M2 8.2H8V4.4Q8 4 8.4 4.3L15.6 10.6Q16 11 15.6 11.4L8.4 17.7Q8 18 8 17.6V13.8H2Q1 13.8 1 12.8V9.2Q1 8.2 2 8.2Z" fill="#3dd80b"/><path d="M15.5 3.3H19Q21.2 3.3 21.2 5.5V16.6Q21.2 18.8 19 18.8H15.5" fill="none" stroke="#3dd80b" stroke-width="2.6" stroke-linecap="round"/></svg>
<svg style="position:absolute;left:1755px;top:615.7px;" width="24" height="22" viewBox="0 0 24 22"><path d="M6.3 1.3H17.5L23.3 11.1L17.5 20.5H6.3L1 11.1Z" fill="none" stroke="#1f3cf5" stroke-width="1.3" stroke-linejoin="round"/><path d="M6.3 1.3L19.5 20M17.5 1.3L5 20M5 15.3H19M6 4V15.3M18.5 4V15.3M7 2.8H17" fill="none" stroke="#1f3cf5" stroke-width="0.8" opacity="0.75"/></svg>
<div class="t" style="left:488.5px;width:100px;text-align:right;top:731.30px;font-size:15px;line-height:15px;color:#212529">6</div>
<div class="t" style="left:603px;top:731.30px;font-size:15px;line-height:15px;color:#212529;letter-spacing:-0.33px;">BAN TAN</div>
<div class="t" style="left:791.34px;width:200px;text-align:center;top:731.30px;font-size:15px;line-height:15px;color:#212529;letter-spacing:0.68px;">21/10/2024</div>
<div class="t" style="left:971.5px;top:731.30px;font-size:15px;line-height:15px;color:#212529;letter-spacing:0.3px;">300243</div>
<div class="t" style="left:1040.5px;width:200px;text-align:center;top:734.68px;font-size:15.5px;line-height:15.5px;color:#4d79c9;letter-spacing:0px;-webkit-text-stroke-width:0;">2</div>
<div class="t" style="left:1144.65px;width:200px;text-align:center;top:731.30px;font-size:15px;line-height:15px;color:#212529;letter-spacing:0.3px;">1.000</div>
<div class="t" style="left:1264.225px;width:200px;text-align:center;top:731.30px;font-size:15px;line-height:15px;color:#212529;letter-spacing:0.45px;">210</div>
<div class="t" style="left:1400.225px;width:200px;text-align:center;top:731.30px;font-size:15px;line-height:15px;color:#212529;letter-spacing:0.45px;">148</div>
<div class="t" style="left:1541.225px;width:200px;text-align:center;top:731.30px;font-size:15px;line-height:15px;color:#212529;letter-spacing:0.45px;">1</div>
<svg style="position:absolute;left:525px;top:729.2px;" width="28" height="22" viewBox="0 0 28 22"><circle cx="9.55" cy="5.7" r="5.4" fill="#0d4ad0"/><path d="M0.3 21.7Q0.3 12.9 8.5 12.9H11Q14.5 12.9 16.3 14.4L14.4 16.6Q13.8 17.5 13.9 21.7Z" fill="#0d4ad0"/><path d="M15.2 21.8L15.8 18.2L21.5 12.5L24.5 15.5L18.8 21.2Z" fill="#0d4ad0"/><path d="M22.4 11.4L23.8 10Q24.9 9 26 10L27 11Q28 12.1 27 13.2L25.6 14.6Z" fill="#0d4ad0"/></svg>
<svg style="position:absolute;left:1720px;top:728.8px;" width="24" height="22" viewBox="0 0 24 22"><path d="M2 8.2H8V4.4Q8 4 8.4 4.3L15.6 10.6Q16 11 15.6 11.4L8.4 17.7Q8 18 8 17.6V13.8H2Q1 13.8 1 12.8V9.2Q1 8.2 2 8.2Z" fill="#3dd80b"/><path d="M15.5 3.3H19Q21.2 3.3 21.2 5.5V16.6Q21.2 18.8 19 18.8H15.5" fill="none" stroke="#3dd80b" stroke-width="2.6" stroke-linecap="round"/></svg>
<svg style="position:absolute;left:1755px;top:728.7px;" width="24" height="22" viewBox="0 0 24 22"><path d="M6.3 1.3H17.5L23.3 11.1L17.5 20.5H6.3L1 11.1Z" fill="none" stroke="#1f3cf5" stroke-width="1.3" stroke-linejoin="round"/><path d="M6.3 1.3L19.5 20M17.5 1.3L5 20M5 15.3H19M6 4V15.3M18.5 4V15.3M7 2.8H17" fill="none" stroke="#1f3cf5" stroke-width="0.8" opacity="0.75"/></svg>
<div style="position:absolute;left:1703px;top:292px;width:120px;height:37px;background:#fff;border-radius:5px;box-shadow:0 0 60px 25px rgba(0,0,0,.05)"></div>
<svg style="position:absolute;left:1759px;top:328px;" width="18" height="10" viewBox="0 0 18 10"><path d="M0 0H18L9 9.5Z" fill="#fff"/></svg>
<div class="t" style="left:1714.7px;top:302.04px;font-size:16.25px;line-height:16.25px;color:#212529;-webkit-text-stroke-width:0.1px;">Vincular lote</div>
</body></html>
